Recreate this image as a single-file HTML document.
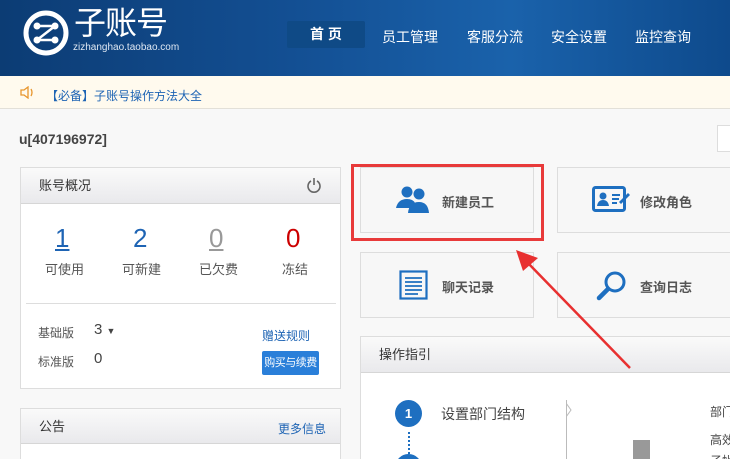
<!DOCTYPE html>
<html><head><meta charset="utf-8"><style>
*{margin:0;padding:0;box-sizing:border-box;white-space:nowrap}
html,body{width:730px;height:459px;overflow:hidden}
body{background:#f8f8f8;font-family:"Liberation Sans","Noto Sans CJK SC",sans-serif;position:relative;color:#333}
.a{position:absolute}
.hd{left:0;top:0;width:730px;height:76px;background:linear-gradient(90deg,#0c3c74 0%,#134f93 40%,#1a62ab 70%,#0e4a8c 100%)}
.nav{color:#fff;font-size:14px;top:27px}
.panel{background:#fff;border:1px solid #ddd}
.ph{background:linear-gradient(#fafafa,#e9e9ec);border-bottom:1px solid #d6d6d6;font-size:13px;color:#333;padding-left:18px}
.btn{background:#f7f7f7;border:1px solid #ddd;font-size:13px;color:#555;font-weight:bold}
</style></head><body>
<div class="a hd"></div>
<svg class="a" style="left:22px;top:9px" width="48" height="48" viewBox="0 0 48 48"><circle cx="24" cy="24" r="20" fill="none" stroke="#fff" stroke-width="5"/><circle cx="15" cy="17" r="3.5" fill="#fff"/><circle cx="33" cy="17" r="3.5" fill="#fff"/><circle cx="15" cy="31" r="3.5" fill="#fff"/><circle cx="33" cy="31" r="3.5" fill="#fff"/><path d="M15 17H33L15 31H33" fill="none" stroke="#fff" stroke-width="2.5"/></svg>
<div class="a" style="left:74px;top:3px;color:#fff;font-size:32px;line-height:40px;letter-spacing:-1px">子账号</div>
<div class="a" style="left:73px;top:42px;color:#dfe8f3;font-size:10px;line-height:12px">zizhanghao.taobao.com</div>
<div class="a" style="left:287px;top:21px;width:78px;height:27px;background:#0f4a86;border-radius:2px;color:#fff;font-size:14px;text-align:center;line-height:27px;font-weight:bold">首 页</div>
<div class="a nav" style="left:382px">员工管理</div>
<div class="a nav" style="left:467px">客服分流</div>
<div class="a nav" style="left:551px">安全设置</div>
<div class="a nav" style="left:635px">监控查询</div>
<div class="a" style="left:0;top:76px;width:730px;height:33px;background:#fffaee;border-bottom:1px solid #e3e0d8"></div>
<svg class="a" style="left:20px;top:86px" width="16" height="13" viewBox="0 0 16 13"><path d="M1 4H4L8 1V12L4 9H1Z" fill="none" stroke="#e8962e" stroke-width="1.3"/><path d="M11 3Q13 6.5 11 10" fill="none" stroke="#e8962e" stroke-width="1.3"/></svg>
<div class="a" style="left:46px;top:87px;font-size:12px;color:#1e64b4">【必备】子账号操作方法大全</div>
<div class="a" style="left:19px;top:131px;font-size:14px;font-weight:bold;color:#444">u[407196972]</div>
<div class="a" style="left:717px;top:125px;width:20px;height:27px;border:1px solid #ddd;background:#fff"></div>

<div class="a panel" style="left:20px;top:167px;width:321px;height:222px"></div>
<div class="a ph" style="left:21px;top:168px;width:319px;height:36px;line-height:36px">账号概况</div>
<svg class="a" style="left:306px;top:177px" width="16" height="16" viewBox="0 0 16 16"><path d="M5 4A6 6 0 1 0 11 4" fill="none" stroke="#666" stroke-width="1.6"/><path d="M8 1V8" stroke="#666" stroke-width="1.6"/></svg>
<div class="a" style="left:55px;top:223px;font-size:26px;color:#1e64b4;text-decoration:underline">1</div>
<div class="a" style="left:133px;top:223px;font-size:26px;color:#1e64b4">2</div>
<div class="a" style="left:209px;top:223px;font-size:26px;color:#999;text-decoration:underline">0</div>
<div class="a" style="left:286px;top:223px;font-size:26px;color:#c00">0</div>
<div class="a" style="left:45px;top:259px;font-size:13px;color:#555">可使用</div>
<div class="a" style="left:122px;top:259px;font-size:13px;color:#555">可新建</div>
<div class="a" style="left:199px;top:259px;font-size:13px;color:#555">已欠费</div>
<div class="a" style="left:282px;top:259px;font-size:13px;color:#555">冻结</div>
<div class="a" style="left:26px;top:303px;width:310px;height:1px;background:#ddd"></div>
<div class="a" style="left:38px;top:324px;font-size:12px;color:#555">基础版</div>
<div class="a" style="left:94px;top:321px;font-size:15px;color:#444">3 <span style="font-size:9px">▼</span></div>
<div class="a" style="left:38px;top:353px;font-size:12px;color:#555">标准版</div>
<div class="a" style="left:94px;top:350px;font-size:15px;color:#444">0</div>
<div class="a" style="left:262px;top:327px;font-size:12px;color:#1e64b4">赠送规则</div>
<div class="a" style="left:262px;top:351px;width:57px;height:24px;background:#2a7fd9;color:#fff;font-size:11px;line-height:24px;text-align:center;border-radius:2px;letter-spacing:-0.5px;overflow:hidden">购买与续费</div>

<div class="a panel" style="left:20px;top:408px;width:321px;height:60px"></div>
<div class="a ph" style="left:21px;top:409px;width:319px;height:35px;line-height:35px">公告</div>
<div class="a" style="left:278px;top:420px;font-size:12px;color:#1e64b4">更多信息</div>

<div class="a btn" style="left:360px;top:167px;width:174px;height:66px"></div>
<svg class="a" style="left:396px;top:184px" width="34" height="30" viewBox="0 0 34 30"><circle cx="11" cy="8" r="5.5" fill="#1e6fc0"/><circle cx="23" cy="10" r="5.5" fill="#1e6fc0"/><path d="M0 24Q2 15 11 15Q17 15 19 19L14 24Z" fill="#1e6fc0"/><path d="M12 29Q13 18 23 18Q32 18 33 29Z" fill="#1e6fc0"/></svg>
<div class="a" style="left:442px;top:192px;font-size:13px;color:#555;font-weight:bold">新建员工</div>
<div class="a" style="left:351px;top:164px;width:193px;height:77px;border:3px solid #e83a3a"></div>

<div class="a btn" style="left:557px;top:167px;width:180px;height:66px"></div>
<svg class="a" style="left:592px;top:186px" width="38" height="27" viewBox="0 0 38 27"><rect x="1.5" y="1.5" width="31" height="23" rx="2" fill="none" stroke="#1e6fc0" stroke-width="3"/><circle cx="11" cy="10" r="3.5" fill="#1e6fc0"/><path d="M5 20Q6 14 11 14Q16 14 17 20Z" fill="#1e6fc0"/><path d="M20 9H28M20 13H27M20 17H25" stroke="#1e6fc0" stroke-width="2"/><path d="M27 16L36 7L38 9L29 18Z" fill="#1e6fc0"/></svg>
<div class="a" style="left:640px;top:192px;font-size:13px;color:#555;font-weight:bold">修改角色</div>

<div class="a btn" style="left:360px;top:252px;width:174px;height:66px"></div>
<svg class="a" style="left:399px;top:270px" width="30" height="30" viewBox="0 0 30 30"><rect x="1.5" y="1.5" width="26" height="27" fill="none" stroke="#1e6fc0" stroke-width="2.2"/><path d="M6 8H23M6 12H23M6 16H23M6 20H23M6 24H19" stroke="#1e6fc0" stroke-width="1.8"/></svg>
<div class="a" style="left:442px;top:277px;font-size:13px;color:#555;font-weight:bold">聊天记录</div>
<div class="a btn" style="left:557px;top:252px;width:180px;height:66px"></div>
<svg class="a" style="left:596px;top:270px" width="32" height="31" viewBox="0 0 32 31"><circle cx="19" cy="12" r="9" fill="none" stroke="#1e6fc0" stroke-width="3"/><path d="M12 19L3 28" stroke="#1e6fc0" stroke-width="4.5" stroke-linecap="round"/></svg>
<div class="a" style="left:640px;top:277px;font-size:13px;color:#555;font-weight:bold">查询日志</div>

<div class="a panel" style="left:360px;top:336px;width:380px;height:130px"></div>
<div class="a ph" style="left:361px;top:337px;width:379px;height:36px;line-height:36px">操作指引</div>
<div class="a" style="left:395px;top:400px;width:27px;height:27px;border-radius:50%;background:#1e6fc0;color:#fff;font-size:13px;font-weight:bold;text-align:center;line-height:27px">1</div>
<div class="a" style="left:408px;top:432px;height:22px;border-left:2px dotted #1e6fc0"></div>
<div class="a" style="left:395px;top:454px;width:27px;height:27px;border-radius:50%;background:#1e6fc0"></div>
<div class="a" style="left:441px;top:404px;font-size:14px;color:#444">设置部门结构</div>
<div class="a" style="left:566px;top:400px;width:1px;height:60px;background:#bbb"></div>
<svg class="a" style="left:566px;top:403px" width="6" height="14"><path d="M0 0L5 7L0 14" fill="none" stroke="#bbb"/></svg>
<div class="a" style="left:633px;top:440px;width:17px;height:20px;background:#999"></div>
<div class="a" style="left:710px;top:403px;font-size:12px;color:#444">部门</div>
<div class="a" style="left:710px;top:431px;font-size:12px;color:#444">高效</div>
<div class="a" style="left:710px;top:452px;font-size:12px;color:#444">子帐</div>

<svg class="a" style="left:0;top:0" width="730" height="459"><path d="M630 368L527 262" stroke="#e83030" stroke-width="2.5"/><path d="M516 250L538 258L523 271Z" fill="#e83030"/></svg>
</body></html>
